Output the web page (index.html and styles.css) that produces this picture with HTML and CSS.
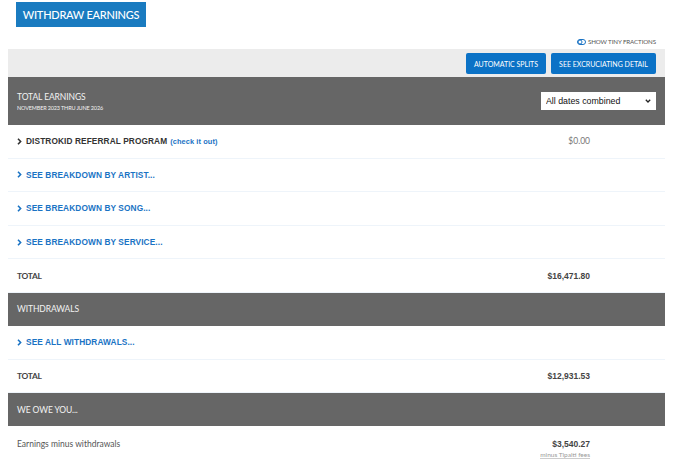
FILE: index.html
```html
<!DOCTYPE html>
<html lang="en">
<head>
<meta charset="utf-8">
<title>Earnings</title>
<link rel="stylesheet" href="styles.css">
</head>
<body>
<div class="page">
  <div class="top">
    <a class="withdraw-btn" href="#">WITHDRAW EARNINGS</a>
  </div>

  <div class="fractions">
    <svg class="toggle" width="9" height="6" viewBox="0 0 9 6" aria-hidden="true">
      <rect x="0.5" y="0.5" width="8" height="5" rx="2.5" fill="none" stroke="#1a73c4" stroke-width="1"/>
      <circle cx="3" cy="3" r="2" fill="none" stroke="#1a73c4" stroke-width="1"/>
    </svg>
    <span>SHOW TINY FRACTIONS</span>
  </div>

  <div class="toolbar">
    <a class="tool-btn" href="#">AUTOMATIC SPLITS</a>
    <a class="tool-btn" href="#">SEE EXCRUCIATING DETAIL</a>
  </div>

  <div class="section-head tall">
    <div>
      <div class="head-title">TOTAL EARNINGS</div>
      <div class="head-sub">NOVEMBER 2023 THRU JUNE 2026</div>
    </div>
    <div class="select-wrap">
      <select class="dates">
        <option>All dates combined</option>
      </select>
      <svg class="select-arrow" width="6" height="4" viewBox="0 0 6 4" aria-hidden="true"><polyline points="0.8,0.8 3,3 5.2,0.8" fill="none" stroke="#222" stroke-width="1.3"/></svg>
    </div>
  </div>

  <div class="row">
    <div class="label dark"><svg class="chev" width="5" height="7" viewBox="0 0 5 7" aria-hidden="true"><polyline points="1,0.8 3.6,3.5 1,6.2" fill="none" stroke="currentColor" stroke-width="1.6"/></svg>DISTROKID REFERRAL PROGRAM <a class="check" href="#">(check it out)</a></div>
    <div class="amount plain">$0.00</div>
  </div>
  <div class="row">
    <div class="label link"><svg class="chev" width="5" height="7" viewBox="0 0 5 7" aria-hidden="true"><polyline points="1,0.8 3.6,3.5 1,6.2" fill="none" stroke="currentColor" stroke-width="1.6"/></svg>SEE BREAKDOWN BY ARTIST...</div>
  </div>
  <div class="row">
    <div class="label link"><svg class="chev" width="5" height="7" viewBox="0 0 5 7" aria-hidden="true"><polyline points="1,0.8 3.6,3.5 1,6.2" fill="none" stroke="currentColor" stroke-width="1.6"/></svg>SEE BREAKDOWN BY SONG...</div>
  </div>
  <div class="row">
    <div class="label link"><svg class="chev" width="5" height="7" viewBox="0 0 5 7" aria-hidden="true"><polyline points="1,0.8 3.6,3.5 1,6.2" fill="none" stroke="currentColor" stroke-width="1.6"/></svg>SEE BREAKDOWN BY SERVICE...</div>
  </div>
  <div class="row">
    <div class="total">TOTAL</div>
    <div class="amount">$16,471.80</div>
  </div>

  <div class="section-head">
    <div class="head-title">WITHDRAWALS</div>
  </div>
  <div class="row">
    <div class="label link"><svg class="chev" width="5" height="7" viewBox="0 0 5 7" aria-hidden="true"><polyline points="1,0.8 3.6,3.5 1,6.2" fill="none" stroke="currentColor" stroke-width="1.6"/></svg>SEE ALL WITHDRAWALS...</div>
  </div>
  <div class="row">
    <div class="total">TOTAL</div>
    <div class="amount">$12,931.53</div>
  </div>

  <div class="section-head">
    <div class="head-title">WE OWE YOU...</div>
  </div>
  <div class="row last">
    <div class="note">Earnings minus withdrawals</div>
    <div class="amount stack">
      <span>$3,540.27</span>
      <a class="fees" href="#">minus Tipalti fees</a>
    </div>
  </div>
</div>
</body>
</html>
```

FILE: styles.css
```css
* { box-sizing: border-box; }

html, body {
  margin: 0;
  background: #fff;
}

body {
  padding: 0 35px 0 8px;
  font-family: Lato, "Liberation Sans", sans-serif;
  color: #555;
}

a { text-decoration: none; }

.top {
  padding: 2px 0 0 8px;
  height: 34px;
}

.withdraw-btn {
  display: inline-flex;
  align-items: center;
  justify-content: center;
  width: 130px;
  height: 25px;
  background: #1a7bc0;
  color: #fff;
  font-size: 11px;
  font-weight: 500;
  letter-spacing: -0.25px;
}

.fractions {
  display: flex;
  justify-content: flex-end;
  align-items: center;
  gap: 2px;
  height: 15px;
  padding-right: 9px;
  font-size: 6.2px;
  color: #555;
  letter-spacing: -0.1px;
}

.toolbar {
  display: flex;
  justify-content: flex-end;
  gap: 5px;
  height: 28px;
  padding: 4px 9px 0 0;
  background: #ececec;
}

.tool-btn {
  display: inline-flex;
  align-items: center;
  justify-content: center;
  height: 21px;
  background: #0b72c6;
  color: #fff;
  font-size: 7px;
  border-radius: 2px;
}

.tool-btn:first-child { width: 80px; }
.tool-btn:last-child { width: 105px; }

.section-head {
  display: flex;
  justify-content: space-between;
  align-items: center;
  height: 33px;
  padding: 0 9px 0 9px;
  background: #666;
  color: #f2f2f2;
}

.section-head.tall { height: 48px; }

.head-title {
  font-size: 8.5px;
  letter-spacing: -0.1px;
}

.head-sub {
  margin-top: 3px;
  font-size: 5.5px;
  letter-spacing: -0.15px;
}

.select-wrap {
  position: relative;
  width: 115px;
  height: 18px;
}

.dates {
  appearance: none;
  -webkit-appearance: none;
  display: block;
  width: 100%;
  height: 100%;
  border: 0;
  border-radius: 0;
  padding: 0 14px 0 5px;
  font-family: "Liberation Sans", Arial, sans-serif;
  font-size: 8.8px;
  color: #111;
  background: #fff;
}

.select-arrow {
  position: absolute;
  right: 5px;
  top: 7px;
  pointer-events: none;
}

.row {
  display: flex;
  justify-content: space-between;
  align-items: center;
  height: 33.6px;
  padding: 0 75px 0 9px;
  border-bottom: 1px solid #eef4fa;
}

.row.last {
  border-bottom: 0;
  align-items: flex-start;
  padding-top: 13px;
}

.label {
  display: flex;
  align-items: center;
  font-family: "Liberation Sans", Arial, sans-serif;
  font-weight: bold;
  font-size: 8.3px;
  letter-spacing: 0.1px;
}

.label.dark { color: #333; }
.label.link { color: #1a73c4; }

.chev {
  flex: none;
  margin-right: 4px;
}

.check {
  margin-left: 3px;
  color: #1a73c4;
  font-size: 7.4px;
}

.total {
  font-weight: bold;
  font-size: 8.4px;
  color: #444;
  letter-spacing: -0.3px;
}

.amount {
  font-family: "Liberation Sans", Arial, sans-serif;
  font-weight: bold;
  font-size: 8.5px;
  color: #444;
}

.amount.plain {
  font-family: Lato, sans-serif;
  font-weight: normal;
  color: #777;
  font-size: 8.5px;
}

.amount.stack {
  display: flex;
  flex-direction: column;
  align-items: flex-end;
  gap: 2px;
}

.fees {
  font-family: Lato, sans-serif;
  font-weight: normal;
  font-size: 6.5px;
  color: #999;
  border-bottom: 1px solid #ccc;
}

.note {
  font-size: 8.5px;
  color: #555;
}
```
